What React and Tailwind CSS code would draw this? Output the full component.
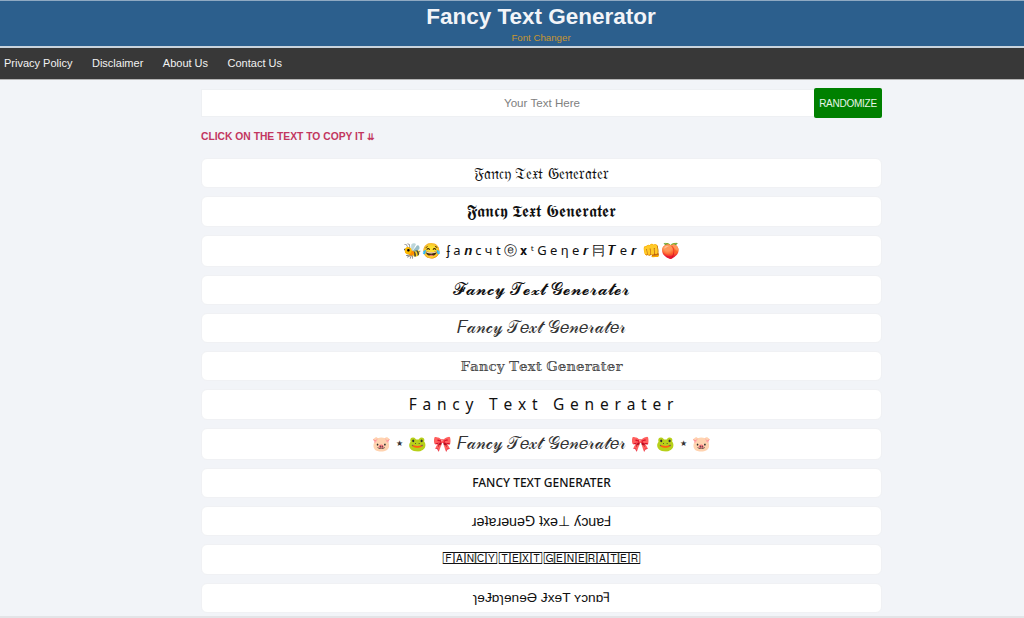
import React from 'react';

const script = '𝐹𝒶𝓃𝒸𝓎 𝒯𝑒𝓍𝓉 𝒢𝑒𝓃𝑒𝓇𝒶𝓉𝑒𝓇';

const App = () => {
  const rows = [
    { cls: 'text-[15.5px]', body: '𝔉𝔞𝔫𝔠𝔶 𝔗𝔢𝔵𝔱 𝔊𝔢𝔫𝔢𝔯𝔞𝔱𝔢𝔯' },
    { cls: 'text-[17px]', body: '𝕱𝖆𝖓𝖈𝖞 𝕿𝖊𝖝𝖙 𝕲𝖊𝖓𝖊𝖗𝖆𝖙𝖊𝖗' },
    {
      cls: "h-[32px] gap-[5px] text-[13px] font-['Noto_Sans',sans-serif]",
      body: (
        <>
          <span className="text-[15px]">🐝😂</span>
          <span>ʄ a 𝒏 c ч t ⓔ 𝐱 ᵗ G e η e 𝒓 冃 𝑻 e 𝒓</span>
          <span className="text-[15px]">👊🍑</span>
        </>
      ),
    },
    { cls: 'text-[17px]', body: '𝓕𝓪𝓷𝓬𝔂 𝓣𝓮𝔁𝓽 𝓖𝓮𝓷𝓮𝓻𝓪𝓽𝓮𝓻' },
    { cls: 'text-[17px] text-[#333]', body: script },
    { cls: "text-[13.5px] text-[#444] font-['DejaVu_Serif',serif]", body: '𝔽𝕒𝕟𝕔𝕪 𝕋𝕖𝕩𝕥 𝔾𝕖𝕟𝕖𝕣𝕒𝕥𝕖𝕣' },
    { cls: "text-[15.5px] tracking-[0.87px] whitespace-pre font-['Noto_Sans',sans-serif]", body: 'F a n c y   T e x t   G e n e r a t e r' },
    {
      cls: 'h-[32px] gap-[5.25px] text-[17px] text-[#333]',
      body: (
        <>
          <span className="text-[15px]">🐷</span>
          <span className="text-[8px]">★</span>
          <span className="text-[15px]">🐸</span>
          <span className="text-[15px]">🎀</span>
          <span>{script}</span>
          <span className="text-[15px]">🎀</span>
          <span className="text-[15px]">🐸</span>
          <span className="text-[8px]">★</span>
          <span className="text-[15px]">🐷</span>
        </>
      ),
    },
    { cls: "text-[12px] font-medium font-['Noto_Sans',sans-serif]", body: 'FANCY TEXT GENERATER' },
    { cls: 'text-[14.3px]', body: 'ɹǝʇɐɹǝuǝ⅁ ʇxǝ⊥ ʎɔuɐℲ' },
    { cls: 'text-[9.5px] tracking-[-0.35px]', body: '🄵🄰🄽🄲🅈 🅃🄴🅇🅃 🄶🄴🄽🄴🅁🄰🅃🄴🅁' },
    { cls: 'text-[13.7px]', body: 'ɿɘɈɒɿɘnɘӘ ɈxɘT ʏɔnɒꟻ' },
  ];

  return (
    <div className="bg-[#f2f4f8] h-screen flex flex-col overflow-hidden font-['Liberation_Sans',sans-serif]">
      {/* Header */}
      <header className="h-[48px] pl-[58px] bg-[#2c5f8d] border-t border-[#8fa9c2] border-b-2 border-b-[#c9d3dc] text-center">
        <h1 className="text-[22.5px] leading-[31px] font-bold text-[#f2f4f8]">Fancy Text Generator</h1>
        <p className="text-[9.7px] leading-[11px] text-[#c9962f]">Font Changer</p>
      </header>

      {/* Nav */}
      <nav className="h-[32px] bg-[#383838] border-b border-[#b5b5b5] flex items-center gap-[19.5px] px-1 text-[11px] text-[#f2f2f2]">
        <a>Privacy Policy</a>
        <a>Disclaimer</a>
        <a>About Us</a>
        <a>Contact Us</a>
      </nav>

      <main className="flex-1 w-[681px] ml-[201px] pt-[8px]">
        <div className="flex items-center h-[30px]">
          <div className="flex-1 h-[28px] pl-[68px] bg-white border-y border-l border-[#eef0f3] flex items-center justify-center text-[11.6px] text-[#808080]">Your Text Here</div>
          <button className="w-[68px] h-[30px] bg-[#008000] text-[#e8f5e8] text-[10px] tracking-[-0.25px] rounded-[2px]">RANDOMIZE</button>
        </div>
        <p className="mt-[13px] text-[10.3px] leading-[12px] font-bold text-[#c2375f]">
          CLICK ON THE TEXT TO COPY IT <span className="text-[9px]">⇊</span>
        </p>

        {/* Font rows */}
        <div className="mt-[15px] flex flex-col gap-2">
          {rows.map((row, i) => (
            <div key={i} className={`h-[30.3px] bg-white rounded-md border border-[#f0f1f4] flex items-center justify-center text-[#111] ${row.cls}`}>
              {row.body}
            </div>
          ))}
        </div>
      </main>

      {/* Bottom edge */}
      <div className="h-[2px] bg-[#e3e4e7]"></div>
    </div>
  );
};

export default App;
